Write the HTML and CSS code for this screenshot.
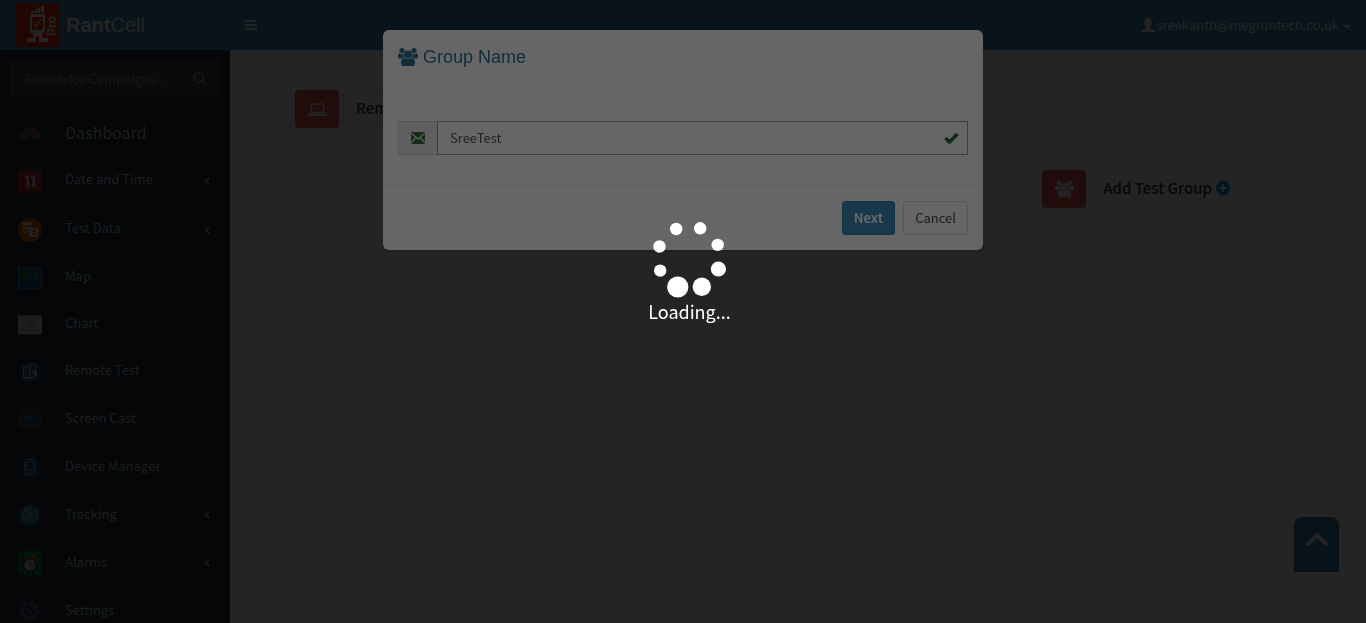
FILE: index.html
```html
<!DOCTYPE html>
<html lang="en">
<head>
<meta charset="utf-8">
<title>RantCell Pro</title>
<link rel="stylesheet" href="styles.css">
</head>
<body>
<svg width="0" height="0" class="sprite" aria-hidden="true">
  <symbol id="users" viewBox="0 0 20 18">
    <circle cx="4" cy="2.6" r="2.6"/><circle cx="16" cy="2.6" r="2.6"/>
    <path d="M0 7.5C0 6 .8 5.2 1.6 5.4c1.3.8 2.8.8 4 .2-.3 1.500 0 2.700.8 3.700-1.200 0-2.200.4-2.900 1.200H1.600C.6 10.500 0 9.800 0 9zM20 7.500c0-1.500-.8-2.300-1.600-2.100-1.300.8-2.800.8-4 .2.3 1.500 0 2.700-.8 3.700 1.200 0 2.200.4 2.900 1.200h1.900c1 0 1.600-.7 1.600-1.500z"/>
    <circle cx="10" cy="6.500" r="4"/>
    <path d="M3 15c0-3 1-5.300 3.300-5.300 2.400 1.800 5 1.800 7.400 0C16 9.700 17 12 17 15c0 1.800-1 3-2.600 3H5.600C4 18 3 16.800 3 15z"/>
  </symbol>
  <symbol id="chevron" viewBox="0 0 6 10"><path d="M4.500 1.500 1 5l3.500 3.500" fill="none" stroke="currentColor" stroke-width="1.300"/></symbol>
</svg>

<header class="topbar">
  <a class="brand" href="#">
    <svg class="brand-logo" viewBox="0 0 45 44" aria-hidden="true">
      <rect width="45" height="44" fill="#e22c10"/>
      <g fill="#eee"><path d="M16 8h3v2h-3zM20 6h2v4h-2zM23 4.500h2V10h-2zM26 3h3v7h-3z"/>
      <path d="M17 11h11q2 0 2 2v15q0 2-2 2h-1v5h6v4h-9v-6h-3v6h-9v-4h6v-5h-1q-2 0-2-2V13q0-2 2-2zm0 3v13h11V14z" fill-rule="evenodd"/></g>
      <path d="m19 21 2 3 5-8" fill="none" stroke="#eee" stroke-width="1.300"/>
      <text class="brand-pro" x="0" y="0" transform="translate(41 33) rotate(-90)">Pro</text>
    </svg>
    <span class="brand-name"><b>Rant</b>Cell</span>
  </a>
  <button class="menu-toggle" type="button" aria-label="Toggle navigation">
    <svg width="12" height="10" viewBox="0 0 12 10"><path d="M0 1h12M0 5h12M0 9h12" stroke="currentColor" stroke-width="2"/></svg>
  </button>
  <a class="account" href="#">
    <svg width="14" height="14" viewBox="0 0 14 14" fill="currentColor"><path d="M7 0c2.500 0 3.600 1.600 3.600 4S9.400 8 8.700 9c0 1 .5 1.300 2 1.900 2 .7 3.300 1 3.300 3.100H0c0-2.100 1.300-2.400 3.300-3.100 1.500-.6 2-.9 2-1.900C4.600 8 3.400 6.400 3.400 4S4.500 0 7 0z"/></svg>
    <span>sreekanth@megrontech.co.uk</span>
    <i class="caret"></i>
  </a>
</header>

<div class="layout">
  <aside class="sidebar">
    <form class="search">
      <input class="search-input" type="text" placeholder="Search for Campaigns..." aria-label="Search for Campaigns">
      <button class="search-button" type="button" aria-label="Search">
        <svg width="14" height="14" viewBox="0 0 14 14" fill="none" stroke="currentColor" stroke-width="2"><circle cx="5.800" cy="5.800" r="4.600"/><path d="m9 9 4 4"/></svg>
      </button>
    </form>
    <nav class="menu">
      <a class="item item-lead" href="#">
        <svg class="icon" viewBox="0 0 24 24"><path d="M1 18a11 11 0 0 1 22 0z" fill="#5d6263"/><path d="M3 17a9 9 0 0 1 11-8l-3 8z" fill="#4c5558"/><path d="m10.500 17 6-7 2.500 2-6 6z" fill="#a51c3c"/><circle cx="12" cy="17" r="2" fill="#222d32"/></svg>
        <span>Dashboard</span></a>
      <a class="item item-tall" href="#">
        <svg class="icon" viewBox="0 0 24 24"><path d="M0 1h24v23H0z" fill="#b92f31"/><path d="M0 22h24v2H0z" fill="#8e2226"/><path d="M3-1h5v4H3zM15-1h5v4h-5z" fill="#4a4f55"/><path d="M7 7h4v11H8.500v-9H7zM13 7h4v11h-2.500v-9H13z" fill="#ddd"/></svg>
        <span>Date and Time</span><svg class="arrow"><use href="#chevron"/></svg></a>
      <a class="item item-tall" href="#">
        <svg class="icon" viewBox="0 0 24 24"><circle cx="12" cy="12" r="12" fill="#d35a00"/><g fill="#ddd"><ellipse cx="9.500" cy="5.700" rx="5" ry="1.700"/><path d="M4.500 8q5 2 9 .5v2l-4 1q-3 0-5-1.500zM4.500 12q2 1.500 5 1.500v2q-3 0-5-1.300z"/><path d="M12 10h8v9h-9v-5h-2v-1.500h3zm2 2v5h4v-5z" fill-rule="evenodd"/><path d="M14 14h3v1.500h-3z"/></g></svg>
        <span>Test Data</span><svg class="arrow"><use href="#chevron"/></svg></a>
      <a class="item item-short" href="#">
        <svg class="icon" viewBox="0 0 24 24"><path d="M.5 1q4 2 8 .5t8 .5 7-1v22q-4-2-8-.5t-8 0-7 1z" fill="#1e5583" stroke="#64809a"/><path d="m1 8 4-3 3 2 4 1-2 3-3 3-6-2z" fill="#1d6e27"/><path d="m12 10 2-1m2-1 2 1m0 2 1 2m0 2 1 1" stroke="#9cb06f" stroke-width="1.300"/></svg>
        <span>Map</span></a>
      <a class="item item-short" href="#">
        <svg class="icon" viewBox="0 0 24 24"><path d="M0 2.500h24v19H0z" fill="#c6c6c6"/><path d="M0 2.500h24v2H0z" fill="#aaa"/><path d="M3 16.500h18v2H3z" fill="#a8a8a8"/><path d="m4 14 3-3 2 2 4-4 3 4 4-4" fill="none" stroke="#888"/><path d="M12.500 7v9m4-9v9" stroke="#999"/></svg>
        <span>Chart</span></a>
      <a class="item item-short" href="#">
        <svg class="icon" viewBox="0 0 24 24"><circle cx="12.500" cy="12" r="10.500" fill="#1d5581"/><path d="M5.500 7H12v10.500H5.500z" fill="#245e8c" stroke="#a9bdcc"/><path d="M5 17h10v2H5z" fill="#a9bdcc"/><path d="M11.500 4.500h6v8h-6z" fill="#23618f" stroke="#a9bdcc"/><path d="M16 10h3v7h-3z" fill="#a9bdcc"/></svg>
        <span>Remote Test</span></a>
      <a class="item" href="#">
        <svg class="icon" viewBox="0 0 24 24"><circle cx="12" cy="12" r="12" fill="#3c4557"/><path d="M6 8h12v8H6z" fill="#0a6ba5" stroke="#252f38"/><path d="M10 18h4" stroke="#777"/></svg>
        <span>Screen Cast</span></a>
      <a class="item" href="#">
        <svg class="icon" viewBox="0 0 24 24"><circle cx="12" cy="12" r="12" fill="#07456f"/><rect x="6.500" y="4.500" width="11" height="15" rx="1" fill="none" stroke="#a9bdc9"/><path d="M8.500 7h7v8h-7z" fill="none" stroke="#93a9b5"/><path d="M10 17.500h4" stroke="#93a9b5"/></svg>
        <span>Device Manager</span></a>
      <a class="item" href="#">
        <svg class="icon" viewBox="0 0 24 24"><circle cx="12" cy="12" r="11" fill="#1c727b"/><g fill="none" stroke="#9dbcc0" stroke-width="1.200"><path d="M16 6a7 7 0 1 1-4-1.200V12l5-5M9.500 8.500a4 4 0 1 0 5.500 1"/></g><circle cx="12" cy="12" r="1.500" fill="#9dbcc0"/></svg>
        <span>Tracking</span><svg class="arrow"><use href="#chevron"/></svg></a>
      <a class="item" href="#">
        <svg class="icon" viewBox="0 0 24 24"><path d="M4 0h17q3 0 3 3v18q0 3-3 3H3q-3 0-3-3V4z" fill="#04813c"/><path d="m5 8 3-4 3 2-5 4zM19 8l-3-4-3 2 5 4z" fill="#c07718"/><path d="M12 1v3m-3-2 1 2m5-2-1 2M7 20l-1 2m11-2 1 2" stroke="#7a756b"/><circle cx="12" cy="14" r="6.500" fill="#bbb" stroke="#333" stroke-width="1.500"/><path d="M12 9.500V14h3" fill="none" stroke="#333"/></svg>
        <span>Alarms</span><svg class="arrow"><use href="#chevron"/></svg></a>
      <a class="item" href="#">
        <svg class="icon" viewBox="0 0 24 24"><circle cx="11.500" cy="12" r="7.200" fill="none" stroke="#784070" stroke-width="3"/><circle cx="11.500" cy="12" r="9" fill="none" stroke="#784070" stroke-width="3" stroke-dasharray="3.500 3.570"/><path d="M9 8.500v3l3 2 8 8" fill="none" stroke="#784070" stroke-width="3"/><path d="m10 7 3 3 1-3z" fill="#784070"/></svg>
        <span>Settings</span></a>
    </nav>
  </aside>

  <main class="content">
    <div class="tool-row">
      <span class="tool-icon"><svg width="19" height="13" viewBox="0 0 19 13"><path d="M3.500 1h12v8.500h-12z" fill="none" stroke="currentColor" stroke-width="1.500"/><path d="M0 10.500h19v1.500q0 1-1.500 1h-16Q0 13 0 12z" fill="currentColor"/></svg></span>
      <button class="tool-label" type="button">Remote Test</button>
    </div>
    <div class="tool-row tool-row-end">
      <span class="tool-icon"><svg width="19" height="18" fill="currentColor"><use href="#users"/></svg></span>
      <button class="tool-label" type="button">Add Test Group
        <svg width="14" height="14" viewBox="0 0 14 14"><circle cx="7" cy="7" r="7" fill="#00a0c6"/><path d="M7 3v8M3 7h8" stroke="#eee" stroke-width="2"/></svg>
      </button>
    </div>
  </main>
</div>

<button class="to-top" type="button" aria-label="Back to top">
  <svg width="22" height="16" viewBox="0 0 22 16"><path d="m1 14 10-10 10 10" fill="none" stroke="currentColor" stroke-width="4"/></svg>
</button>

<div class="backdrop">
  <section class="modal" role="dialog" aria-labelledby="modal-title">
    <div class="modal-header">
      <svg width="20" height="18" fill="currentColor"><use href="#users"/></svg>
      <h4 class="modal-title" id="modal-title">Group Name</h4>
    </div>
    <div class="modal-body">
      <div class="field">
        <label class="addon" for="group" aria-label="Group name">
          <svg width="14" height="12" viewBox="0 0 14 12"><path d="M0 0h14v12H0z" fill="#36703a"/><path d="m0 1 7 6 7-6M0 11l4.500-5M14 11 9.500 6" fill="none" stroke="#eee" stroke-width="1.200"/></svg>
        </label>
        <input class="field-input" id="group" type="text" value="SreeTest">
        <svg class="field-check" width="15" height="12" viewBox="0 0 15 12"><path d="m1.500 6 4 4 8-8" fill="none" stroke="#2f6b31" stroke-width="3.600"/></svg>
      </div>
    </div>
    <div class="modal-footer">
      <button class="btn btn-primary" type="button">Next</button>
      <button class="btn" type="button">Cancel</button>
    </div>
  </section>
</div>

<div class="loader" role="status">
  <svg width="76" height="78" viewBox="0 0 76 78" fill="#fff"><circle cx="24.200" cy="8" r="6.200"/><circle cx="48.200" cy="7.300" r="6.200"/><circle cx="65.700" cy="23.900" r="6.200"/><circle cx="66.400" cy="48" r="7.600"/><circle cx="49.800" cy="65.700" r="9.200"/><circle cx="25.800" cy="66" r="10.600"/><circle cx="8.200" cy="49.600" r="6.200"/><circle cx="7.500" cy="25.500" r="6.200"/></svg>
  <span>Loading...</span>
</div>
</body>
</html>
```
FILE: styles.css
```css
* { box-sizing: border-box; }
html, body { height: 100%; }
body {
  margin: 0;
  display: flex;
  flex-direction: column;
  overflow: hidden;
  background: #ecf5f0;
  color: #333;
  font-family: "Noto Sans CJK SC", "Noto Sans", sans-serif;
  font-size: 13px;
  line-height: 20px;
}
button, input { font: inherit; color: inherit; margin: 0; }
button { border: 0; padding: 0; background: none; }
a { color: inherit; text-decoration: none; }
svg { display: block; flex: none; }
.sprite { position: absolute; }

.topbar {
  flex: none;
  display: flex;
  align-items: center;
  height: 50px;
  background: #3a88b4;
  color: #f0f0f0;
}
.brand { display: flex; align-items: center; gap: 6px; width: 230px; padding-left: 15px; }
.brand-logo { width: 45px; height: 44px; }
.brand-pro { font: bold 12px "Liberation Sans", Arial, sans-serif; fill: #eee; }
.brand-name { font: 20px/50px "Liberation Sans", Arial, sans-serif; }
.menu-toggle { padding: 15px; }
.account { display: flex; align-items: center; gap: 1px; margin-left: auto; padding-right: 15px; }
.caret { border: 4px solid transparent; border-top-color: currentColor; border-bottom: 0; margin-left: 3px; margin-top: 3px; }

.layout { flex: 1; display: flex; min-height: 0; }
.sidebar { flex: none; width: 230px; padding-top: 10px; background: #222d32; color: #b8c7ce; overflow: hidden; }
.search { display: flex; align-items: center; height: 37px; margin: 0 10px; border-radius: 3px; background: #374850; }
.search-input { flex: 1; min-width: 0; height: 36px; padding: 0 0 0 14px; border: 0; background: none; color: #999; }
.search-input::placeholder { color: #999; opacity: 1; }
.search-button { padding: 10px 13px; color: #999; }
.menu { display: flex; flex-direction: column; padding-top: 13px; }
.item { flex: none; display: flex; align-items: center; height: 48px; padding: 0 19px 0 18px; }
.item span { padding-bottom: 3px; }
.item-lead { height: 46px; font-size: 16px; }
.item-tall { height: 49px; }
.item-short { height: 47px; }
.icon { width: 24px; height: 24px; margin-right: 23px; overflow: visible; }
.arrow { width: 6px; height: 10px; margin-left: auto; }

.content { flex: 1; display: flex; flex-direction: column; gap: 42px; padding: 40px 123px 40px 65px; }
.tool-row { display: flex; gap: 4px; height: 38px; }
.tool-row-end { justify-content: flex-end; }
.tool-icon { display: flex; align-items: center; justify-content: center; width: 44px; border-radius: 4px; background: #d8524c; color: #eee; }
.tool-label {
  display: flex;
  align-items: center;
  gap: 4px;
  padding: 0 12px 2px;
  border: 1px solid #ddd;
  border-radius: 3px;
  font-size: 15px;
  font-weight: 500;
}
.to-top {
  position: fixed;
  right: 27px;
  bottom: 51px;
  display: flex;
  justify-content: center;
  width: 45px;
  height: 55px;
  padding-top: 14px;
  border-radius: 8px 8px 0 0;
  background: #367fa9;
  color: #eee;
}

.backdrop { position: fixed; inset: 0; padding-top: 30px; background: rgba(0, 0, 0, .64); }
.modal { width: 600px; margin: 0 auto; border-radius: 6px; background: #fff; box-shadow: 0 2px 3px rgba(0, 0, 0, .125); }
.modal-header { display: flex; align-items: center; gap: 5px; height: 56px; padding: 0 15px 2px; border-bottom: 1px solid #f0f0f0; color: #31708f; }
.modal-title { margin: 0; font: 18px/20px "Liberation Sans", Arial, sans-serif; }
.modal-body { padding: 35px 15px 30px; }
.field { position: relative; display: flex; height: 34px; }
.addon { display: flex; align-items: center; justify-content: center; width: 39px; border: 1px solid #d2d6de; border-right: 0; background: #eee; }
.field-input { flex: 1; min-width: 0; padding: 0 12px; border: 1px solid #999; background: #fff; color: #555; outline: 0; }
.field-check { position: absolute; right: 9px; top: 11px; }
.modal-footer { display: flex; justify-content: flex-end; gap: 8px; padding: 15px; border-top: 1px solid #f0f0f0; }
.btn { height: 34px; padding: 0 11px; border: 1px solid #ddd; border-radius: 3px; color: #444; }
.btn-primary { border-color: #367fa9; background: #3c8dbc; color: #fff; font-weight: 700; }

.loader {
  position: fixed;
  inset: 0;
  display: flex;
  flex-direction: column;
  align-items: center;
  gap: 2px;
  padding: 221px 0 0 13px;
  background: rgba(0, 0, 0, .6);
  color: #fff;
  font-size: 18px;
}
```
